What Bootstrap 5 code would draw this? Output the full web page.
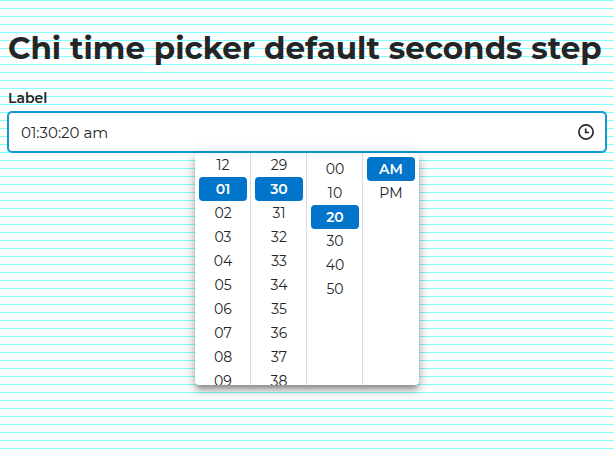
<!DOCTYPE html>
<html lang="en">
<head>
<meta charset="utf-8">
<meta name="viewport" content="width=device-width, initial-scale=1">
<title>Chi time picker</title>
<link href="https://cdn.jsdelivr.net/npm/bootstrap@5.3.0/dist/css/bootstrap.min.css" rel="stylesheet">
<style>
  body {
    min-height: 100vh;
    font-family: Montserrat, Inter, "Liberation Sans", sans-serif;
    font-size: 14px;
    line-height: 24px;
    color: #242526;
    background: repeating-linear-gradient(to bottom, #80ffff 0 1px, #fff 1px 8px);
  }
  .page-title { font-size: 31px; line-height: 48px; white-space: nowrap; }
  .time-label { line-height: 20px; }
  .time-input, .time-input:focus {
    height: 40px;
    padding: 0 40px 0 12px;
    font-size: 15px;
    color: #242526;
    background: #fff;
    border: 1px solid #0f9ad6;
    border-radius: 4px;
    box-shadow: 0 0 0 1px #0f9ad6;
  }
  .clock { right: 12px; }
  .picker {
    top: 41px;
    width: 224px;
    height: 232px;
    border-radius: 4px;
    box-shadow: 0 5px 5px -2px rgba(0,0,0,.3), 0 6px 10px 1px rgba(0,0,0,.16), 0 2px 14px 2px rgba(0,0,0,.12);
  }
  .picker-col { padding: 4px 3px 0 4px; border-right: 1px solid #d8dae0; }
  .picker-col:last-child { border-right-color: transparent; }
  .picker-col.scrolled { padding-top: 0; }
  .slot {
    flex: 0 0 24px;
    padding: 0;
    border: 0;
    border-radius: 4px;
    background: transparent;
    color: #242526;
    line-height: 24px;
  }
  .slot.active { background: #0075c9; color: #fff; font-weight: 600; }
</style>
</head>
<body>
<main class="p-2">
  <h1 class="page-title fw-bold mt-3 mb-3">Chi time picker default seconds step</h1>
  <label class="time-label fw-semibold d-block mb-1" for="time">Label</label>
  <div class="position-relative d-flex align-items-center justify-content-center">
    <input class="form-control time-input" id="time" type="text" value="01:30:20 am">
    <svg class="clock position-absolute" width="16" height="16" viewBox="0 0 16 16" fill="none" stroke="#242526" stroke-width="1.7" aria-hidden="true">
      <circle cx="8" cy="8" r="7.1"/>
      <path d="M7.7 4.4V8.5H11"/>
    </svg>
    <div class="picker position-absolute d-flex bg-white overflow-hidden">
      <div class="picker-col scrolled col-3 d-flex flex-column">
        <button type="button" class="slot">12</button>
        <button type="button" class="slot active">01</button>
        <button type="button" class="slot">02</button>
        <button type="button" class="slot">03</button>
        <button type="button" class="slot">04</button>
        <button type="button" class="slot">05</button>
        <button type="button" class="slot">06</button>
        <button type="button" class="slot">07</button>
        <button type="button" class="slot">08</button>
        <button type="button" class="slot">09</button>
      </div>
      <div class="picker-col scrolled col-3 d-flex flex-column">
        <button type="button" class="slot">29</button>
        <button type="button" class="slot active">30</button>
        <button type="button" class="slot">31</button>
        <button type="button" class="slot">32</button>
        <button type="button" class="slot">33</button>
        <button type="button" class="slot">34</button>
        <button type="button" class="slot">35</button>
        <button type="button" class="slot">36</button>
        <button type="button" class="slot">37</button>
        <button type="button" class="slot">38</button>
      </div>
      <div class="picker-col col-3 d-flex flex-column">
        <button type="button" class="slot">00</button>
        <button type="button" class="slot">10</button>
        <button type="button" class="slot active">20</button>
        <button type="button" class="slot">30</button>
        <button type="button" class="slot">40</button>
        <button type="button" class="slot">50</button>
      </div>
      <div class="picker-col col-3 d-flex flex-column">
        <button type="button" class="slot active">AM</button>
        <button type="button" class="slot">PM</button>
      </div>
    </div>
  </div>
</main>
<script src="https://cdn.jsdelivr.net/npm/bootstrap@5.3.0/dist/js/bootstrap.bundle.min.js"></script>
</body>
</html>
